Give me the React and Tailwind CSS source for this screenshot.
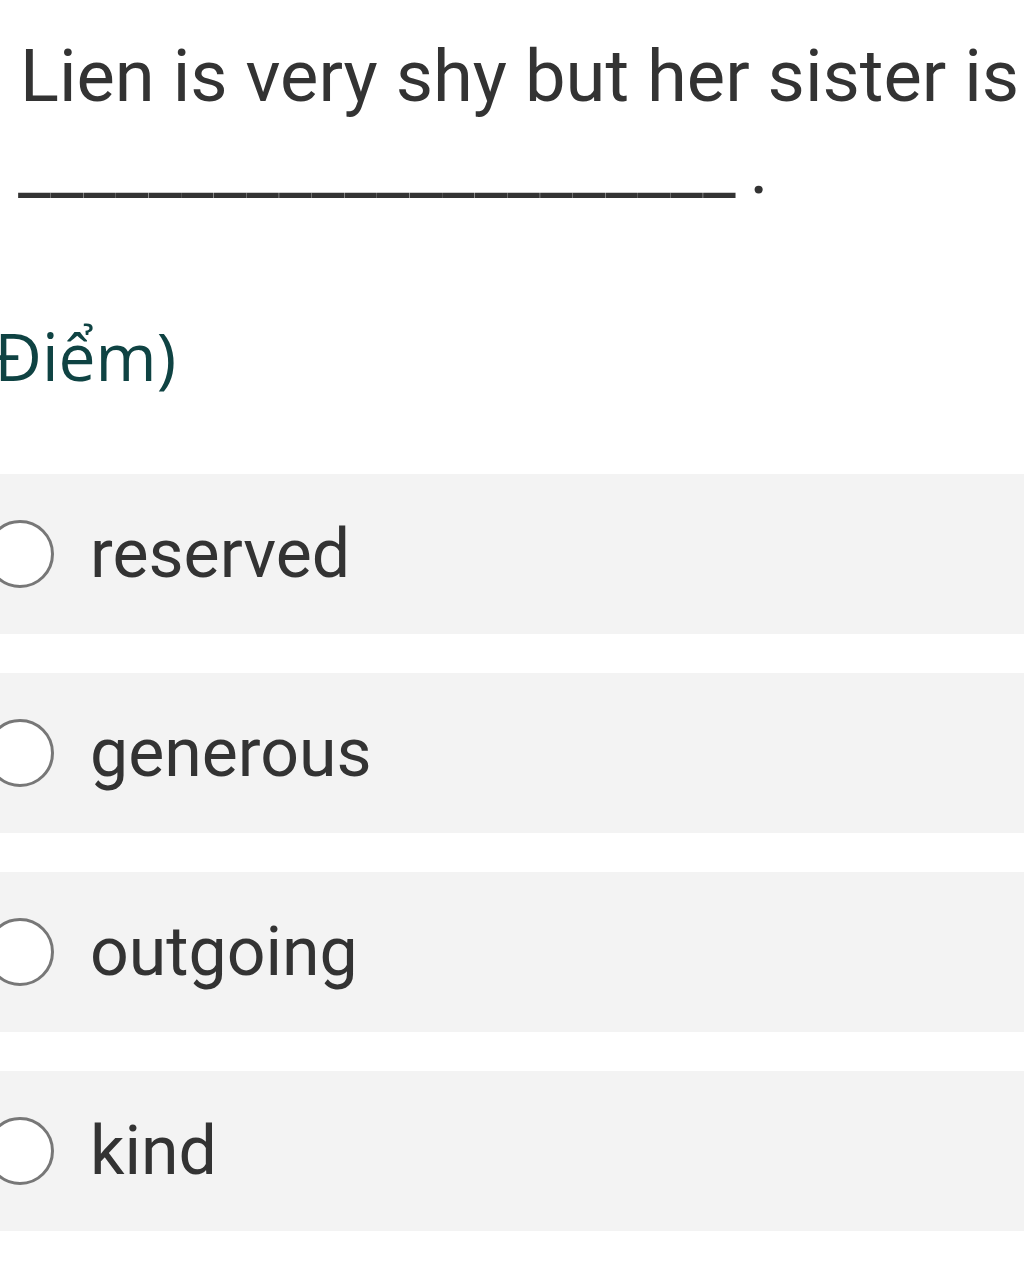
const options = ['reserved', 'generous', 'outgoing', 'kind'];

export default function App() {
  return (
    <div className="min-h-[1279px] w-[1024px] overflow-hidden bg-white" style={{ fontFamily: 'Roboto, "Noto Sans", sans-serif' }}>
      <div className="pl-[20px] pt-[31px] text-[72.3px] leading-[92px] text-[#333333] whitespace-nowrap">
        <div>Lien is very shy but her sister is</div>
        <div className="-ml-[2px]">______________________<span className="ml-[14px]">.</span></div>
      </div>

      <div className="mt-[90px] -ml-[6px] text-[66px] leading-[100px] text-[#0f4343] whitespace-nowrap" style={{ fontFamily: '"Open Sans", "Noto Sans", sans-serif' }}>
        Điểm)
      </div>

      <div className="mt-[69px] flex flex-col gap-[39px]">
        {options.map((opt) => (
          <div key={opt} className="flex h-[160px] items-center bg-[#f3f3f3]">
            <div className="-ml-[14px] h-[68px] w-[68px] shrink-0 rounded-full border-[3px] border-[#777777] bg-white" />
            <span className="ml-[36px] text-[68px] text-[#333333]">{opt}</span>
          </div>
        ))}
      </div>
    </div>
  );
}
